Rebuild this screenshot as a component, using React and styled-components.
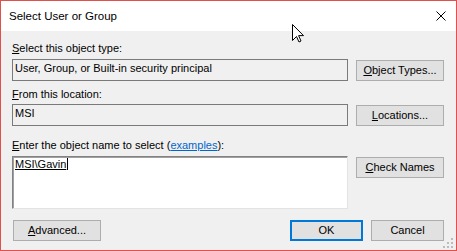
import React from "react";
import styled, { createGlobalStyle } from "styled-components";

const GlobalStyle = createGlobalStyle`
  body {
    margin: 0;
    background: #ffffff;
  }
`;

const Window = styled.div`
  position: relative;
  width: 457px;
  height: 251px;
  box-sizing: border-box;
  border: 1px solid #e2504d;
  background: #f0f0f0;
  display: flex;
  flex-direction: column;
  font-family: "Liberation Sans", Arial, sans-serif;
  font-size: 11px;
  color: #000;
`;

const TitleBar = styled.div`
  height: 30px;
  flex-shrink: 0;
  background: #ffffff;
  display: flex;
  align-items: center;
  justify-content: space-between;
  padding: 0 10px 0 8px;
  font-size: 11.5px;
`;

const CloseIcon = styled.svg`
  display: block;
  width: 10px;
  height: 10px;
`;

const Body = styled.div`
  flex: 1;
  display: flex;
  flex-direction: column;
  padding: 11px 12px 9px 11px;
`;

const Label = styled.div`
  line-height: 13px;
  height: 13px;
  margin-top: ${props => props.top || 0}px;
  margin-bottom: ${props => props.bottom || 4}px;
  white-space: nowrap;
`;

const Row = styled.div`
  display: flex;
  gap: 8px;
  align-items: ${props => props.align || "flex-end"};
`;

const TextBox = styled.div`
  width: 336px;
  height: 22px;
  box-sizing: border-box;
  border: 1px solid #7a7a7a;
  background: #f0f0f0;
  padding: 2px 2px 0;
  line-height: 13px;
  white-space: nowrap;
`;

const TextArea = styled.div`
  width: 336px;
  height: 53px;
  box-sizing: border-box;
  background: #ffffff;
  border-top: 1px solid #828282;
  border-left: 1px solid #828282;
  border-right: 1px solid #e3e3e3;
  border-bottom: 1px solid #e3e3e3;
  box-shadow: inset 1px 1px 0 #a0a0a0;
  padding: 1px 1px 0 2px;
  line-height: 13px;
`;

const Resolved = styled.span`
  text-decoration: underline;
  text-underline-offset: 1px;
`;

const Caret = styled.span`
  display: inline-block;
  width: 1px;
  height: 12px;
  margin-left: 1px;
  background: #000;
  vertical-align: -2px;
`;

const Button = styled.button`
  width: ${props => props.w || 88}px;
  height: 21px;
  box-sizing: border-box;
  margin: 0;
  margin-top: ${props => props.top || 0}px;
  padding: 0;
  border: ${props => (props.primary ? "2px solid #0078d7" : "1px solid #adadad")};
  background: #e1e1e1;
  font-family: inherit;
  font-size: 11px;
  color: #000;
  line-height: ${props => (props.primary ? 17 : 19)}px;
  text-align: center;
  white-space: nowrap;
  cursor: default;
`;

const Link = styled.span`
  color: #0066cc;
  text-decoration: underline;
`;

const Footer = styled.div`
  display: flex;
  align-items: center;
  margin-top: 11px;
  gap: 8px;
  padding-left: 1px;
`;

const Spacer = styled.div`
  flex: 1;
`;

const Pointer = styled.svg`
  position: absolute;
  left: 291px;
  top: 23px;
  width: 12px;
  height: 19px;
  pointer-events: none;
`;

const Grip = styled.svg`
  position: absolute;
  right: 3px;
  bottom: 2px;
  width: 10px;
  height: 10px;
`;

const gripDots = [
  [8, 0],
  [4, 4],
  [8, 4],
  [0, 8],
  [4, 8],
  [8, 8],
];

export default function App() {
  return (
    <>
      <GlobalStyle />
      <Window>
        <TitleBar>
          <span>Select User or Group</span>
          <CloseIcon viewBox="0 0 10 10">
            <path d="M0.5 0.5 L9.5 9.5 M9.5 0.5 L0.5 9.5" stroke="#000" strokeWidth="1" />
          </CloseIcon>
        </TitleBar>
        <Body>
          <Label>
            <u>S</u>elect this object type:
          </Label>
          <Row>
            <TextBox>User, Group, or Built-in security principal</TextBox>
            <Button>
              <u>O</u>bject Types...
            </Button>
          </Row>

          <Label top={7} bottom={3}>
            <u>F</u>rom this location:
          </Label>
          <Row>
            <TextBox>MSI</TextBox>
            <Button>
              <u>L</u>ocations...
            </Button>
          </Row>

          <Label top={13}>
            <u>E</u>nter the object name to select (<Link>examples</Link>):
          </Label>
          <Row align="flex-start">
            <TextArea>
              <Resolved>MSI\Gavin</Resolved>
              <Caret />
            </TextArea>
            <Button top={1}>
              <u>C</u>heck Names
            </Button>
          </Row>

          <Footer>
            <Button>
              <u>A</u>dvanced...
            </Button>
            <Spacer />
            <Button w={73} primary>
              OK
            </Button>
            <Button w={73}>Cancel</Button>
          </Footer>
        </Body>

        <Pointer viewBox="0 0 12 19">
          <path
            d="M0.5 0.5 L0.5 16.5 L4.5 12.5 L7 18 L9 17 L6.6 11.6 L11.5 11.6 Z"
            fill="#fff"
            stroke="#000"
            strokeWidth="1"
            strokeLinejoin="miter"
          />
        </Pointer>

        <Grip viewBox="0 0 10 10">
          {gripDots.map(([x, y]) => (
            <rect key={`${x}-${y}`} x={x} y={y} width="2" height="2" fill="#bcbcbc" />
          ))}
        </Grip>
      </Window>
    </>
  );
}
